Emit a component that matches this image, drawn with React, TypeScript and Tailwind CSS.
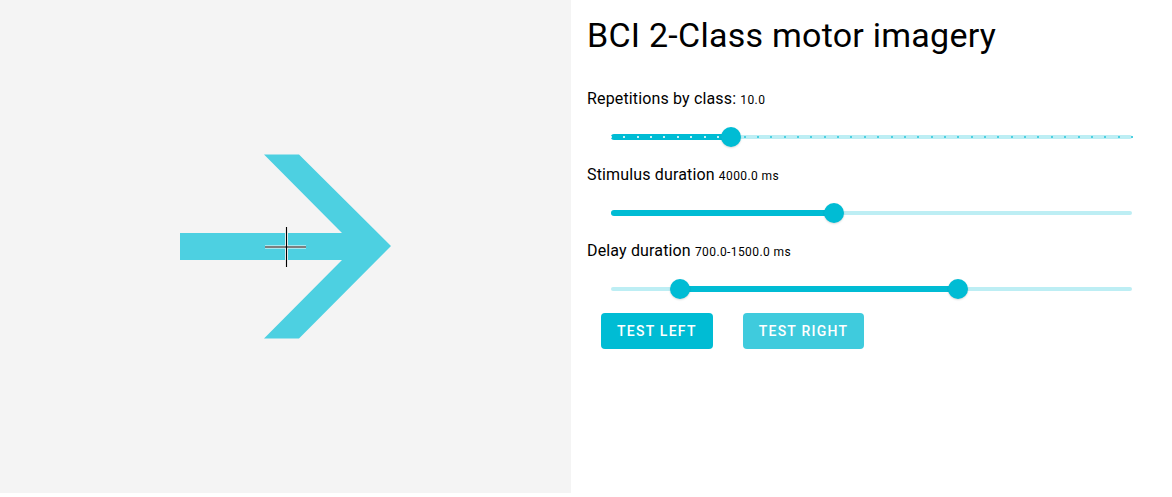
import React from "react";

function Slider({ min, max, values, step }: { min: number; max: number; values: number[]; step?: number }) {
  const pct = (v: number) => ((v - min) / (max - min)) * 100;
  const lo = values.length > 1 ? pct(values[0]) : 0;
  const hi = pct(values[values.length - 1]);
  const marks: number[] = [];
  if (step) {
    for (let v = min; v <= max + 1e-9; v += step) marks.push(v);
  }
  return (
    <div className="h-[50px] pt-[2px] px-6 flex items-center">
      <div className="relative w-full h-5 flex items-center">
        <div className="absolute left-0 right-0 h-1 rounded-full bg-[#bdeef4]" />
        <div
          className="absolute h-[6px] rounded-full bg-[#00bcd4]"
          style={{ left: `${lo}%`, width: `${hi - lo}%` }}
        />
        {marks.map((m) => {
          const p = pct(m);
          const active = p >= lo && p <= hi;
          return (
            <div
              key={m}
              className={
                "absolute w-[2px] h-[2px] -ml-[1px] " +
                (active ? "bg-white opacity-80" : "bg-[#4dd0e1]")
              }
              style={{ left: `${p}%` }}
            />
          );
        })}
        {values.map((v, i) => (
          <div
            key={i}
            className="absolute w-5 h-5 -ml-[10px] rounded-full bg-[#00bcd4] shadow-[0_1px_2px_rgba(0,0,0,0.15)]"
            style={{ left: `${pct(v)}%` }}
          />
        ))}
      </div>
    </div>
  );
}

function Label({ name, value }: { name: string; value: string }) {
  return (
    <div className="h-6 leading-6 text-[16px] tracking-[0.15px] text-black">
      {name} <span className="text-[12px] tracking-[0.4px]">{value}</span>
    </div>
  );
}

export default function App() {
  return (
    <div className="flex w-[1172px] h-[497px] bg-white" style={{ fontFamily: "Roboto, 'Noto Sans', sans-serif" }}>
      <div className="w-[571px] h-[493px] bg-[#f4f4f4] flex items-center justify-center shrink-0">
        <svg width="212" height="185" viewBox="0 0 212 185" className="-ml-[1px]">
          <polygon
            points="1,79 163,79 85,0.5 120,0.5 212,92 120,184.5 85,184.5 163,106 1,106"
            fill="#4dd0e1"
          />
          <g strokeLinecap="butt">
            <line x1="86" y1="93" x2="127" y2="93" stroke="#fff" strokeWidth="3" />
            <line x1="107.5" y1="73" x2="107.5" y2="113" stroke="#fff" strokeWidth="3" />
            <line x1="86" y1="93" x2="127" y2="93" stroke="#000" strokeWidth="1.2" />
            <line x1="107.5" y1="73" x2="107.5" y2="113" stroke="#000" strokeWidth="1.2" />
          </g>
        </svg>
      </div>
      <div className="flex-1 pl-4 pr-4 pt-[14px] flex flex-col">
        <h1 className="text-[34px] leading-[42px] tracking-[0.25px] font-normal text-black">BCI 2-Class motor imagery</h1>
        <div className="mt-[31px] flex flex-col">
          <Label name="Repetitions by class:" value="10.0" />
          <Slider min={1} max={40} step={1} values={[10]} />
          <div className="mt-[2px]">
            <Label name="Stimulus duration" value="4000.0 ms" />
          </div>
          <Slider min={1000} max={8000} values={[4000]} />
          <div className="mt-[2px]">
            <Label name="Delay duration" value="700.0-1500.0 ms" />
          </div>
          <Slider min={500} max={2000} values={[700, 1500]} />
        </div>
        <div className="flex gap-[30px] ml-[14px]">
          <button className="h-9 px-4 rounded bg-[#00bcd4] text-white text-[14px] font-medium tracking-[1.25px] uppercase">
            Test left
          </button>
          <button className="h-9 px-4 rounded bg-[#3fcbdd] text-white text-[14px] font-medium tracking-[1.25px] uppercase">
            Test right
          </button>
        </div>
      </div>
    </div>
  );
}
